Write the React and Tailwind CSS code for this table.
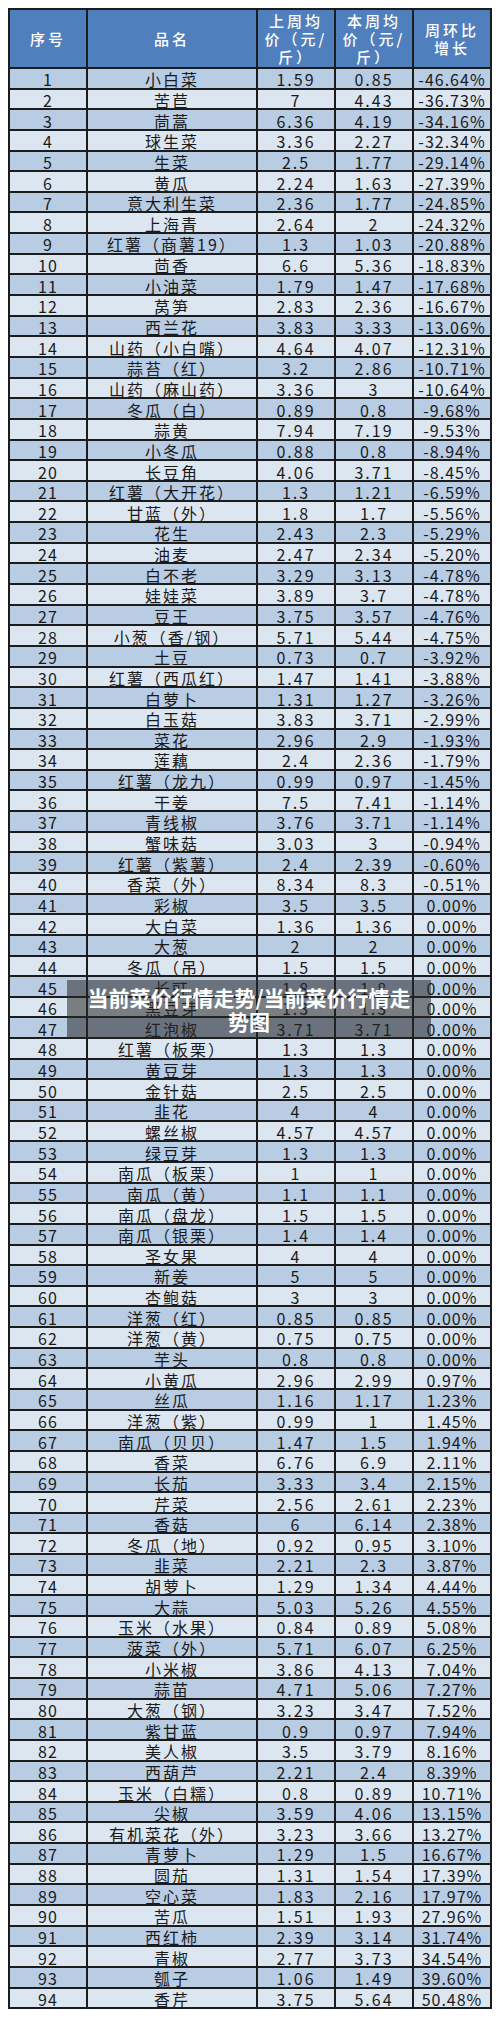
import React from "react";

const raw = `小白菜|1.59|0.85|-46.64%
苦苣|7|4.43|-36.73%
茼蒿|6.36|4.19|-34.16%
球生菜|3.36|2.27|-32.34%
生菜|2.5|1.77|-29.14%
黄瓜|2.24|1.63|-27.39%
意大利生菜|2.36|1.77|-24.85%
上海青|2.64|2|-24.32%
红薯(商薯19)|1.3|1.03|-20.88%
茴香|6.6|5.36|-18.83%
小油菜|1.79|1.47|-17.68%
莴笋|2.83|2.36|-16.67%
西兰花|3.83|3.33|-13.06%
山药(小白嘴)|4.64|4.07|-12.31%
蒜苔(红)|3.2|2.86|-10.71%
山药(麻山药)|3.36|3|-10.64%
冬瓜(白)|0.89|0.8|-9.68%
蒜黄|7.94|7.19|-9.53%
小冬瓜|0.88|0.8|-8.94%
长豆角|4.06|3.71|-8.45%
红薯(大开花)|1.3|1.21|-6.59%
甘蓝(外)|1.8|1.7|-5.56%
花生|2.43|2.3|-5.29%
油麦|2.47|2.34|-5.20%
白不老|3.29|3.13|-4.78%
娃娃菜|3.89|3.7|-4.78%
豆王|3.75|3.57|-4.76%
小葱(香/钢)|5.71|5.44|-4.75%
土豆|0.73|0.7|-3.92%
红薯(西瓜红)|1.47|1.41|-3.88%
白萝卜|1.31|1.27|-3.26%
白玉菇|3.83|3.71|-2.99%
菜花|2.96|2.9|-1.93%
莲藕|2.4|2.36|-1.79%
红薯(龙九)|0.99|0.97|-1.45%
干姜|7.5|7.41|-1.14%
青线椒|3.76|3.71|-1.14%
蟹味菇|3.03|3|-0.94%
红薯(紫薯)|2.4|2.39|-0.60%
香菜(外)|8.34|8.3|-0.51%
彩椒|3.5|3.5|0.00%
大白菜|1.36|1.36|0.00%
大葱|2|2|0.00%
冬瓜(吊)|1.5|1.5|0.00%
长豇|1.8|1.8|0.00%
黑豆芽|1.3|1.3|0.00%
红泡椒|3.71|3.71|0.00%
红薯(板栗)|1.3|1.3|0.00%
黄豆芽|1.3|1.3|0.00%
金针菇|2.5|2.5|0.00%
韭花|4|4|0.00%
螺丝椒|4.57|4.57|0.00%
绿豆芽|1.3|1.3|0.00%
南瓜(板栗)|1|1|0.00%
南瓜(黄)|1.1|1.1|0.00%
南瓜(盘龙)|1.5|1.5|0.00%
南瓜(银栗)|1.4|1.4|0.00%
圣女果|4|4|0.00%
新姜|5|5|0.00%
杏鲍菇|3|3|0.00%
洋葱(红)|0.85|0.85|0.00%
洋葱(黄)|0.75|0.75|0.00%
芋头|0.8|0.8|0.00%
小黄瓜|2.96|2.99|0.97%
丝瓜|1.16|1.17|1.23%
洋葱(紫)|0.99|1|1.45%
南瓜(贝贝)|1.47|1.5|1.94%
香菜|6.76|6.9|2.11%
长茄|3.33|3.4|2.15%
芹菜|2.56|2.61|2.23%
香菇|6|6.14|2.38%
冬瓜(地)|0.92|0.95|3.10%
韭菜|2.21|2.3|3.87%
胡萝卜|1.29|1.34|4.44%
大蒜|5.03|5.26|4.55%
玉米(水果)|0.84|0.89|5.08%
菠菜(外)|5.71|6.07|6.25%
小米椒|3.86|4.13|7.04%
蒜苗|4.71|5.06|7.27%
大葱(钢)|3.23|3.47|7.52%
紫甘蓝|0.9|0.97|7.94%
美人椒|3.5|3.79|8.16%
西葫芦|2.21|2.4|8.39%
玉米(白糯)|0.8|0.89|10.71%
尖椒|3.59|4.06|13.15%
有机菜花(外)|3.23|3.66|13.27%
青萝卜|1.29|1.5|16.67%
圆茄|1.31|1.54|17.39%
空心菜|1.83|2.16|17.97%
苦瓜|1.51|1.93|27.96%
西红柿|2.39|3.14|31.74%
青椒|2.77|3.73|34.54%
瓠子|1.06|1.49|39.60%
香芹|3.75|5.64|50.48%`;

const rows = raw.split("\n").map((l, i) => {
  const [name, a, b, c] = l.split("|");
  return { n: i + 1, name, a, b, c };
});

const fmtName = (s) => s.replace("(", "（").replace(")", "）");

const Head = ({ children }) => (
  <div className="bg-[#4f80bd] text-white flex items-center justify-center text-center text-[15px] leading-[18px] tracking-[3px] font-medium">
    <span className="block">{children}</span>
  </div>
);

export default function App() {
  return (
    <div className="w-[500px] h-[2018px] bg-white relative">
      <div className="pt-[8px] pl-[8px]">
        <div
          className="w-[484px] grid grid-cols-[76px_168px_76px_76px_76px] grid-rows-[57px] auto-rows-[18.65px] gap-[2px] bg-[#1c1c1c] p-[2px] text-[#1a1a1a]"
          style={{ fontFamily: '"Noto Sans CJK SC", "Noto Sans", sans-serif' }}
        >
          <Head>序号</Head>
          <Head>品名</Head>
          <Head>
            上周均
            <br />
            价（元/
            <br />
            斤）
          </Head>
          <Head>
            本周均
            <br />
            价（元/
            <br />
            斤）
          </Head>
          <Head>
            周环比
            <br />
            增长
          </Head>
          {rows.map((r) => {
            const bg = r.n % 2 === 1 ? "bg-[#b8cce4]" : "bg-[#dce6f1]";
            const cell = `${bg} flex items-center justify-center leading-[18px] pt-[2px] text-[16px] whitespace-nowrap`;
            return (
              <React.Fragment key={r.n}>
                <div className={`${cell} tracking-[1px]`}>{r.n}</div>
                <div className={`${cell} tracking-[2px]`}>{fmtName(r.name)}</div>
                <div className={`${cell} tracking-[2px]`}>{r.a}</div>
                <div className={`${cell} tracking-[2px]`}>{r.b}</div>
                <div className={`${cell} tracking-[1px]`}>{r.c}</div>
              </React.Fragment>
            );
          })}
        </div>
      </div>
      <div
        className="absolute left-[67px] top-[980px] w-[364px] h-[58px] bg-[rgba(40,40,40,0.55)] flex items-center justify-center text-center text-white font-bold text-[21px] leading-[24px]"
        style={{ fontFamily: '"Noto Sans CJK SC", sans-serif' }}
      >
        <span>
          当前菜价行情走势/当前菜价行情走
          <br />
          势图
        </span>
      </div>
    </div>
  );
}
